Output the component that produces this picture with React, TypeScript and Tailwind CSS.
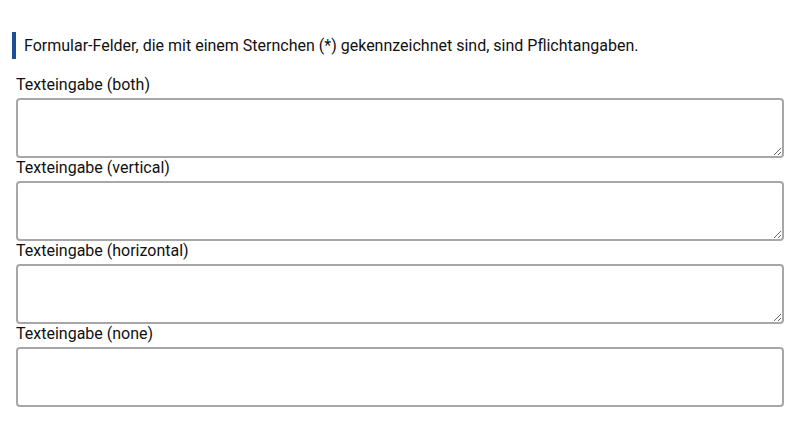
import React from 'react'

const fields = [
  { label: 'Texteingabe (both)', resize: 'resize' },
  { label: 'Texteingabe (vertical)', resize: 'resize-y' },
  { label: 'Texteingabe (horizontal)', resize: 'resize-x' },
  { label: 'Texteingabe (none)', resize: 'resize-none' },
]

const App = () => {
  return (
    <div className="px-4 pt-8 text-[#111] bg-white min-h-[423px]" style={{ fontFamily: 'Roboto, sans-serif' }}>
      <p className="-ml-1 border-l-4 border-[#1c4f91] pl-2 py-1 text-base leading-[19px]">
        Formular-Felder, die mit einem Sternchen (*) gekennzeichnet sind, sind Pflichtangaben.
      </p>
      <form className="mt-4 flex flex-col">
        {fields.map((f, i) => (
          <div key={i} className="flex flex-col">
            <label htmlFor={`ta-${i}`} className="block text-base leading-[19px] mb-1">
              {f.label}
            </label>
            <textarea
              id={`ta-${i}`}
              className={`block w-full h-[60px] border-2 border-[#a7a7a7] rounded-[4px] bg-white ${f.resize}`}
            />
          </div>
        ))}
      </form>
    </div>
  )
}

export default App
